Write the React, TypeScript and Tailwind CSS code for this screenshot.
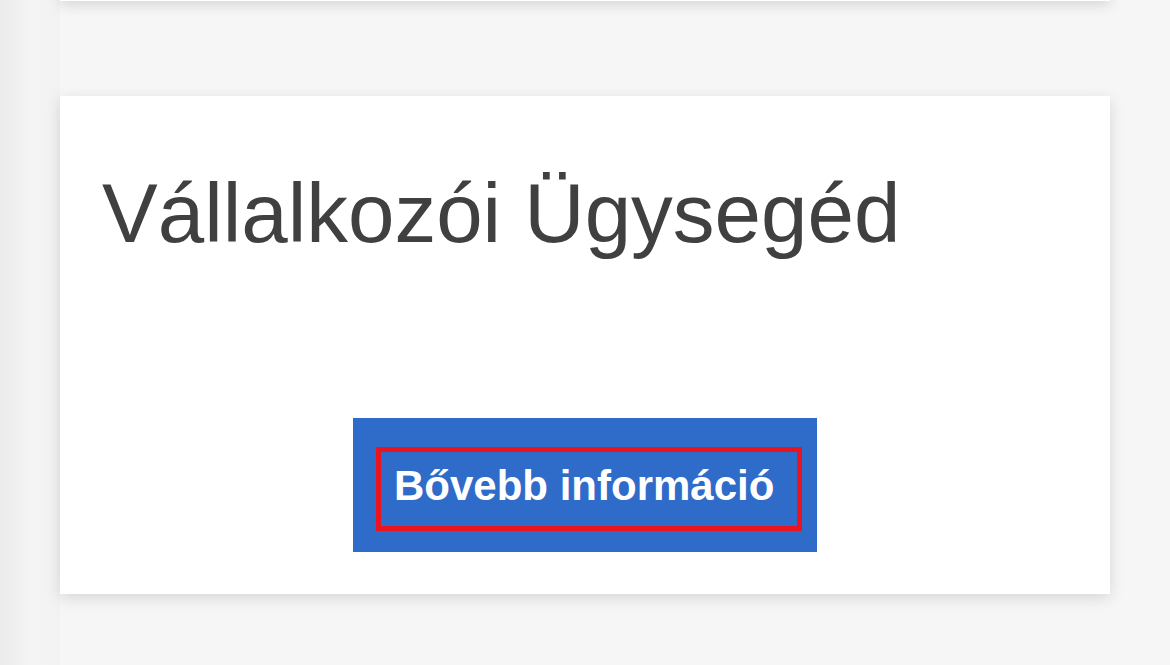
export default function App() {
  return (
    <div
      className="relative w-[1170px] h-[665px] overflow-hidden bg-[#f6f6f6]"
      style={{ fontFamily: '"Liberation Sans", Arial, sans-serif' }}
    >
      <div className="absolute left-0 top-0 h-full w-[60px] bg-gradient-to-r from-[#ebebeb] via-[#f4f4f4] to-[#f2f2f2]" />
      <div className="relative flex flex-col px-[60px]">
        <div className="-mt-[20px] h-[21px] bg-white shadow-[0_4px_14px_rgba(0,0,0,0.13)]" />
        <div className="mt-[95px] bg-white shadow-[0_4px_14px_rgba(0,0,0,0.13)] pt-[76px] pb-[42px] pl-[42px] flex flex-col">
          <h1 className="text-[83.5px] leading-none font-normal text-[#404040] whitespace-nowrap">
            Vállalkozói Ügysegéd
          </h1>
          <div className="mt-[162px] flex justify-center pr-[42px]">
            <div className="w-[464px] h-[134px] bg-[#2f6bc9] pt-[29px] pl-[23px]">
              <div className="w-[426px] h-[84px] border-[5px] border-[#e8141f] pt-[13px] pl-[13px]">
                <span className="text-[42px] leading-none font-bold text-white whitespace-nowrap block">
                  Bővebb információ
                </span>
              </div>
            </div>
          </div>
        </div>
      </div>
    </div>
  );
}
